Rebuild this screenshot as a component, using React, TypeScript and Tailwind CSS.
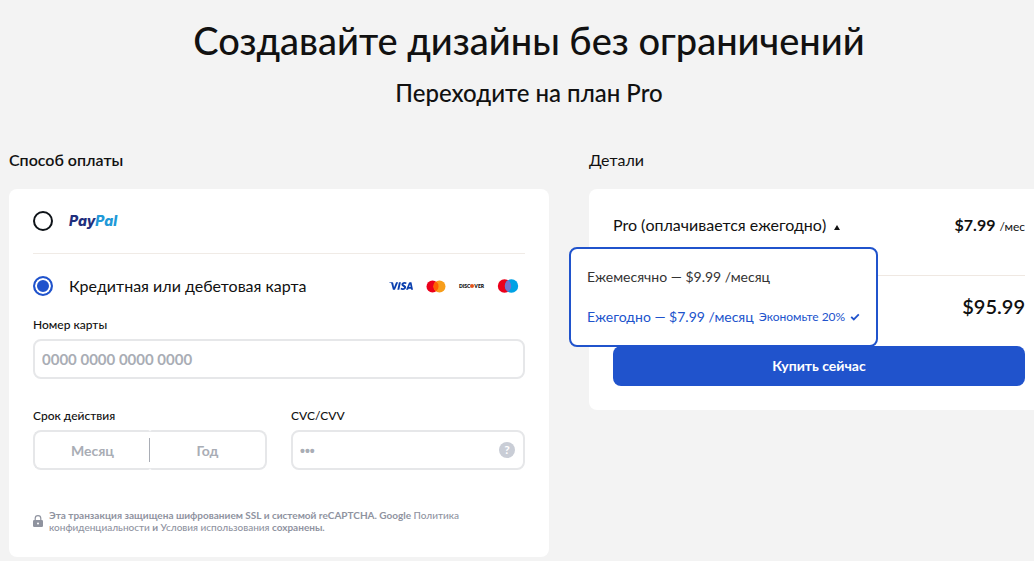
import { useState, type ReactNode } from 'react'
import { SiVisa } from 'react-icons/si'

type Plan = 'month' | 'year'
type Method = 'paypal' | 'card'

const PLANS: { key: Plan; label: string; note?: string }[] = [
  { key: 'month', label: 'Ежемесячно — $9.99 /месяц' },
  { key: 'year', label: 'Ежегодно — $7.99 /месяц', note: 'Экономьте 20%' },
]

const field =
  'h-10 w-full border-2 border-[#e6e7e9] bg-white font-bold text-[#0e1318] outline-none placeholder:text-[#a9adb5] focus:border-[#2053cc]'

export default function App() {
  return (
    <div className="min-h-screen overflow-x-hidden bg-[#f3f3f3] font-['Lato','Noto_Sans',sans-serif] text-[#111]">
      <main className="-mr-[15px] pl-[9px]">
        <header className="pt-4 text-center">
          <h1 className="text-[38px] leading-[48px] font-medium">Создавайте дизайны без ограничений</h1>
          <p className="mt-3 text-2xl leading-[34px] font-medium">Переходите на план Pro</p>
        </header>

        <div className="mt-10 grid grid-cols-[27fr_23fr] items-start gap-10">
          <Payment />
          <Details />
        </div>
      </main>
    </div>
  )
}

function Payment() {
  const [method, setMethod] = useState<Method>('card')

  return (
    <section>
      <h2 className="text-base leading-5 font-semibold">Способ оплаты</h2>
      <form className="mt-[19px] rounded-lg bg-white px-6 pb-6">
        <div className="flex h-16 items-center">
          <Radio id="paypal" checked={method === 'paypal'} onChange={() => setMethod('paypal')} />
          <label htmlFor="paypal" className="ml-4 font-['Inter',sans-serif] text-sm leading-5 font-extrabold text-[#1f2f7d] italic">
            Pay<span className="text-[#2199d8]">Pal</span>
          </label>
        </div>

        <div className="flex h-[65px] items-center border-t border-[#f0ebe6]">
          <Radio id="card" checked={method === 'card'} onChange={() => setMethod('card')} />
          <label htmlFor="card" className="ml-4 text-base font-normal">
            Кредитная или дебетовая карта
          </label>
          <CardLogos />
        </div>

        <FieldLabel id="number">Номер карты</FieldLabel>
        <input id="number" placeholder="0000 0000 0000 0000" className={`${field} rounded-lg px-[7px] text-[15px]`} />

        <div className="mt-[30px] grid grid-cols-2 gap-6">
          <div>
            <FieldLabel id="exp-month">Срок действия</FieldLabel>
            <div className="relative flex">
              <input
                id="exp-month"
                placeholder="Месяц"
                className={`${field} rounded-l-lg rounded-r-xs border-r-0 text-center text-sm`}
              />
              <input
                aria-label="Год"
                placeholder="Год"
                className={`${field} rounded-l-xs rounded-r-lg border-l-0 text-center text-sm`}
              />
              <span className="absolute top-2 left-1/2 -ml-px h-6 w-px bg-[#a9adb5]" />
            </div>
          </div>
          <div>
            <FieldLabel id="cvc">CVC/CVV</FieldLabel>
            <div className="relative">
              <input
                id="cvc"
                placeholder="•••"
                className={`${field} rounded-lg px-[7px] text-sm placeholder:font-['Liberation_Sans',sans-serif]`}
              />
              <button
                type="button"
                aria-label="CVC"
                className="absolute top-3 right-[10px] size-4 rounded-full bg-[#c9cdd6] text-xs leading-4 font-bold text-white"
              >
                ?
              </button>
            </div>
          </div>
        </div>

        <div className="mt-[39px] flex items-center gap-[6px]">
          <LockIcon />
          <p className="text-[10px] leading-3 font-bold text-[#8f939f]">
            Эта транзакция защищена шифрованием SSL и системой reCAPTCHA. Google{' '}
            <a href="#privacy" className="font-medium">
              Политика
              <br />
              конфиденциальности
            </a>{' '}
            и{' '}
            <a href="#terms" className="font-medium">
              Условия использования
            </a>{' '}
            сохранены.
          </p>
        </div>
      </form>
    </section>
  )
}

function Details() {
  const [open, setOpen] = useState(true)
  const [plan, setPlan] = useState<Plan>('year')

  return (
    <section>
      <h2 className="text-base leading-5 font-normal">Детали</h2>
      <div className="relative mt-[19px] rounded-lg bg-white px-6 pb-6">
        <div className="flex h-[86px] items-start justify-between pt-6">
          <button onClick={() => setOpen(!open)} className="flex items-center gap-2 text-base leading-6 font-normal">
            Pro ({plan === 'year' ? 'оплачивается ежегодно' : 'оплачивается ежемесячно'})
            <svg width="6" height="5" viewBox="0 0 6 5" className="mt-1 shrink-0">
              <path d="M3 0 6 5H0z" fill="#111" />
            </svg>
          </button>
          <div className="text-base leading-6 font-bold">
            {plan === 'year' ? '$7.99' : '$9.99'} <span className="text-xs font-normal">/мес</span>
          </div>
        </div>
        <div className="h-[71px] border-t border-[#efe8e2] pt-4 text-right text-xl leading-7 font-semibold">
          {plan === 'year' ? '$95.99' : '$9.99'}
        </div>
        <button className="h-10 w-full rounded-lg bg-[#2053cc] text-sm font-bold text-white">Купить сейчас</button>

        {open && (
          <div className="absolute top-[58px] -left-5 w-[309px] rounded-lg border-2 border-[#2053cc] bg-white px-4 py-2">
            {PLANS.map((p) => (
              <button
                key={p.key}
                onClick={() => setPlan(p.key)}
                className={`flex h-10 w-full items-center text-sm whitespace-nowrap ${
                  plan === p.key ? 'text-[#2053cc]' : 'text-[#333]'
                }`}
              >
                {p.label}
                {p.note && <span className="ml-[5px] text-xs">{p.note}</span>}
                {plan === p.key && (
                  <svg width="10" height="8" viewBox="0 0 10 8" className="ml-[5px] shrink-0">
                    <path d="m1.2 3.8 2.6 2.6 5-5" fill="none" stroke="currentColor" strokeWidth="1.8" />
                  </svg>
                )}
              </button>
            ))}
          </div>
        )}
      </div>
    </section>
  )
}

function Radio({ id, checked, onChange }: { id: string; checked: boolean; onChange: () => void }) {
  return (
    <input
      id={id}
      type="radio"
      name="method"
      checked={checked}
      onChange={onChange}
      className="size-5 shrink-0 appearance-none rounded-full border-2 border-[#0e1318] bg-white checked:border-[#2053cc] checked:bg-[#2053cc] checked:shadow-[inset_0_0_0_2px_#fff]"
    />
  )
}

function FieldLabel({ id, children }: { id: string; children: ReactNode }) {
  return (
    <label htmlFor={id} className="mb-[7px] block text-xs leading-[14px] font-medium">
      {children}
    </label>
  )
}

function CardLogos() {
  return (
    <div className="mr-[6px] ml-auto flex items-center">
      <SiVisa size={24} color="#0a3fae" />
      <svg width="20" height="13" viewBox="0 0 20 13" className="ml-[13px]">
        <circle cx="6.5" cy="6.5" r="6" fill="#eb001b" />
        <circle cx="13.5" cy="6.5" r="6" fill="#f79e1b" />
        <path d="M10 1.6a6 6 0 0 1 0 9.8 6 6 0 0 1 0-9.8" fill="#ff5f00" />
      </svg>
      <span className="ml-3 flex w-[27px] items-center justify-center text-[5px] leading-none font-extrabold">
        DISC
        <span className="size-1 rounded-full bg-[#e5531a]" />
        VER
      </span>
      <svg width="22" height="14" viewBox="0 0 22 14" className="ml-3">
        <circle cx="7.5" cy="7" r="6.7" fill="#eb001b" />
        <circle cx="14.5" cy="7" r="6.7" fill="#00a2e5" />
        <path d="M11 1.3a6.7 6.7 0 0 1 0 11.4 6.7 6.7 0 0 1 0-11.4" fill="#7375cf" />
      </svg>
    </div>
  )
}

function LockIcon() {
  return (
    <svg width="10" height="12" viewBox="0 0 10 12" className="shrink-0">
      <path d="M2.2 6V3.4a2.8 2.8 0 0 1 5.6 0V6" fill="none" stroke="#8f939f" strokeWidth="1.2" />
      <rect y="5" width="10" height="7" rx="1.2" fill="#8f939f" />
      <circle cx="5" cy="8.5" r="1" fill="#fff" />
    </svg>
  )
}
